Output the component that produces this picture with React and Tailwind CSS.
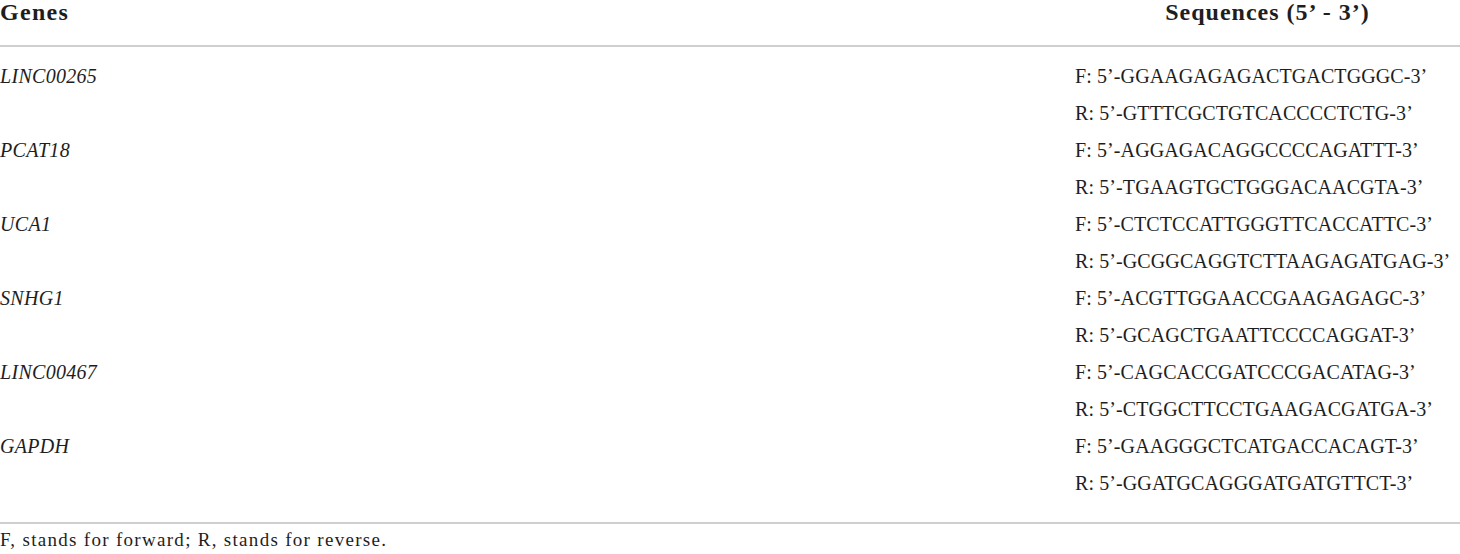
export default function App() {
  const data = [
    ["LINC00265", "GGAAGAGAGACTGACTGGGC", "GTTTCGCTGTCACCCCTCTG"],
    ["PCAT18", "AGGAGACAGGCCCCAGATTT", "TGAAGTGCTGGGACAACGTA"],
    ["UCA1", "CTCTCCATTGGGTTCACCATTC", "GCGGCAGGTCTTAAGAGATGAG"],
    ["SNHG1", "ACGTTGGAACCGAAGAGAGC", "GCAGCTGAATTCCCCAGGAT"],
    ["LINC00467", "CAGCACCGATCCCGACATAG", "CTGGCTTCCTGAAGACGATGA"],
    ["GAPDH", "GAAGGGCTCATGACCACAGT", "GGATGCAGGGATGATGTTCT"],
  ];
  return (
    <div className="w-[1460px] h-[554px] bg-white text-[#1e1e1e] overflow-hidden" style={{ fontFamily: '"Liberation Serif", "Times New Roman", serif' }}>
      <div className="flex h-[47px] border-b-2 border-[#cfcfcf]">
        <div className="flex-1 text-[24px] leading-none font-bold tracking-[1.3px]">Genes</div>
        <div className="w-[385px] text-center text-[24px] leading-none font-bold tracking-[1px] whitespace-nowrap">Sequences (5’ - 3’)</div>
      </div>
      <div className="pt-[11px] pb-[20px] border-b-2 border-[#cfcfcf]">
        {data.map(([g, f, r]) => (
          <div key={g} className="flex">
            <div className="flex-1 italic text-[20px] leading-[37px] tracking-[0.3px]">{g}</div>
            <div className="w-[385px] text-[20px] leading-[37px] tracking-[0.1px] whitespace-nowrap">
              <div>F: 5’-{f}-3’</div>
              <div>R: 5’-{r}-3’</div>
            </div>
          </div>
        ))}
      </div>
      <div className="mt-[6px] text-[19px] leading-none tracking-[1.3px] whitespace-nowrap">F, stands for forward; R, stands for reverse.</div>
    </div>
  );
}
